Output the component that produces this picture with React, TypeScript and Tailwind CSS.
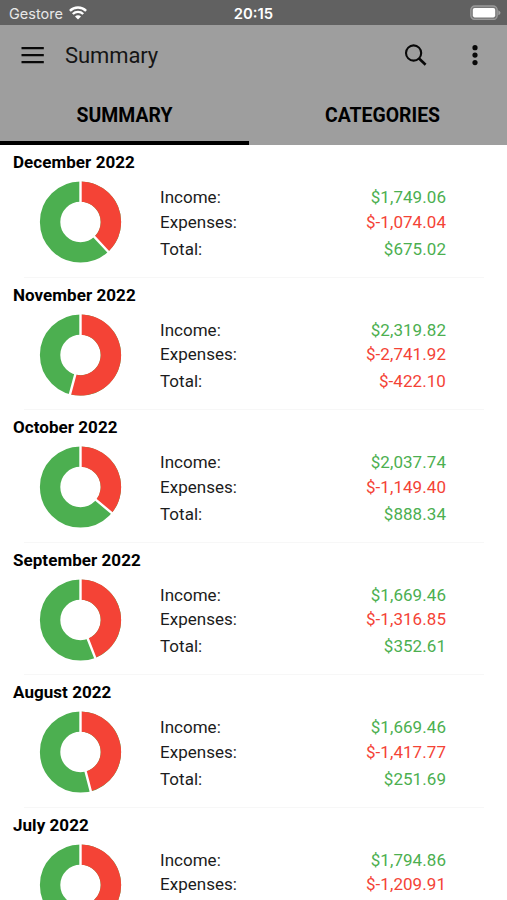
type Month = { name: string; income: number; expenses: number };

const months: Month[] = [
  { name: 'December 2022', income: 1749.06, expenses: 1074.04 },
  { name: 'November 2022', income: 2319.82, expenses: 2741.92 },
  { name: 'October 2022', income: 2037.74, expenses: 1149.4 },
  { name: 'September 2022', income: 1669.46, expenses: 1316.85 },
  { name: 'August 2022', income: 1669.46, expenses: 1417.77 },
  { name: 'July 2022', income: 1794.86, expenses: 1209.91 },
];

const money = (n: number) =>
  '$' + n.toLocaleString('en-US', { minimumFractionDigits: 2, maximumFractionDigits: 2 });

function Donut({ share }: { share: number }) {
  const angle = share * Math.PI * 2;
  const x = Math.sin(angle);
  const y = -Math.cos(angle);
  const large = share > 0.5 ? 1 : 0;
  const red = `M0 -40.6A40.6 40.6 0 ${large} 1 ${x * 40.6} ${y * 40.6}L${x * 20.2} ${y * 20.2}A20.2 20.2 0 ${large} 0 0 -20.2Z`;
  return (
    <svg className="ml-[39px] h-[83px] w-[83px] shrink-0" viewBox="-41.5 -42 83 83">
      <circle r="30.4" fill="none" stroke="#4caf50" strokeWidth="20.4" />
      <path d={red} fill="#f44336" />
      <path d={`M0 -19V-42M${x * 19} ${y * 19}L${x * 42} ${y * 42}`} stroke="#fff" strokeWidth="2.4" />
    </svg>
  );
}

function Line({ label, value, className }: { label: string; value: number; className: string }) {
  return (
    <div className={`flex justify-between ${className}`}>
      <span className="tracking-[0.02px] text-[#1c1c1c]">{label}</span>
      <span className={value < 0 ? 'text-[#f44336]' : 'text-[#4caf50]'}>{money(value)}</span>
    </div>
  );
}

function MonthRow({ month }: { month: Month }) {
  const { name, income, expenses } = month;
  return (
    <section className="flex h-[132.5px] shrink-0 flex-col">
      <h2 className="mt-[5px] ml-[13px] h-6 text-[17px] leading-6 font-bold tracking-[0.05px] text-black">{name}</h2>
      <div className="mt-[6px] flex">
        <Donut share={expenses / (income + expenses)} />
        <div className="mt-[5px] ml-[38px] w-[286px] text-[17px] tracking-[0.06px]">
          <Line label="Income:" value={income} className="h-[24.5px] leading-[25px]" />
          <Line label="Expenses:" value={-expenses} className="h-[27px] leading-[25px]" />
          <Line label="Total:" value={income - expenses} className="h-[25px] leading-[25px]" />
        </div>
      </div>
      <div className="mt-auto mr-[23px] ml-6 h-px bg-[#f7f7f7]" />
    </section>
  );
}

export default function App() {
  return (
    <div className="flex h-[900px] w-[507px] flex-col overflow-hidden bg-white font-['Roboto',sans-serif]">
      <div className="grid h-[25px] shrink-0 grid-cols-3 items-center bg-[#616161] pr-[6px] pl-[9px] text-white">
        <div className="flex items-center gap-[6px] pt-[2px] font-['Inter',sans-serif] text-[14.5px] text-[#e8e8e8]">
          Gestore
          <svg className="-mt-[2px] h-[14px] w-[18px]" viewBox="0 0 18 14" fill="none" stroke="#fff" strokeWidth="2.4">
            <path d="M0.9 4.9A11.5 11.5 0 0 1 17.1 4.9" />
            <path d="M3.8 8A7.4 7.4 0 0 1 14.2 8" />
            <path d="M9 13.5L6 10.5A4.2 4.2 0 0 1 12 10.5Z" fill="#fff" stroke="none" />
          </svg>
        </div>
        <div className="pt-[3px] pr-[3px] text-center font-['Inter',sans-serif] text-[14.8px] leading-[22px] font-semibold">20:15</div>
        <svg className="h-[15px] w-[31px] justify-self-end" viewBox="0 0 31 15">
          <rect x="0.8" y="1" width="26.4" height="13.4" rx="4" fill="#777" stroke="#9a9a9a" strokeWidth="1.3" />
          <rect x="2.8" y="3" width="22.4" height="9.4" rx="1.8" fill="#fff" />
          <path d="M28.3 5.2V10.2Q30.5 9.2 30.5 7.7T28.3 5.2Z" fill="#a0a0a0" />
        </svg>
      </div>

      <header className="flex h-[120px] shrink-0 flex-col bg-[#9e9e9e]">
        <div className="flex h-[60px] items-center pr-[26px] pl-[21px]">
          <svg className="h-[18px] w-[23px]" viewBox="0 0 23 18" stroke="#080808" strokeWidth="2.3">
            <path d="M0.5 2.2H22.8M0.5 9.2H22.8M0.5 16.2H22.8" />
          </svg>
          <h1 className="ml-[21px] pt-[2px] text-[22px] leading-none tracking-[-0.1px] text-[#151515]">Summary</h1>
          <svg className="ml-auto h-6 w-6" viewBox="0 0 24 24" fill="none" stroke="#080808" strokeWidth="2.1">
            <circle cx="9.6" cy="10" r="7.6" />
            <path d="M14.8 15.2L21.6 21.7" strokeWidth="2.6" />
          </svg>
          <svg className="ml-[41px] h-6 w-[12px]" viewBox="0 0 12 24" fill="#080808">
            <circle cx="6" cy="4.7" r="2.6" />
            <circle cx="6" cy="12.1" r="2.6" />
            <circle cx="6" cy="19.6" r="2.6" />
          </svg>
        </div>
        <nav className="flex h-[60px] text-[19.4px] font-bold text-black">
          <div className="flex w-[249px] items-center justify-center border-b-4 border-black pt-[5px]">SUMMARY</div>
          <div className="flex flex-1 items-center justify-center pt-[1px] pl-[9px]">CATEGORIES</div>
        </nav>
      </header>

      <main className="flex min-h-0 flex-1 flex-col overflow-hidden">
        {months.map((month) => (
          <MonthRow key={month.name} month={month} />
        ))}
      </main>
    </div>
  );
}
